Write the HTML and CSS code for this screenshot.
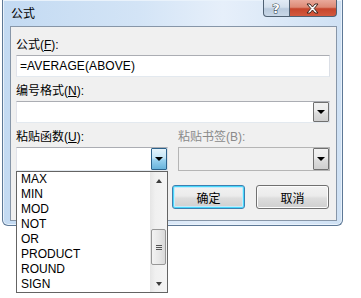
FILE: index.html
```html
<!DOCTYPE html>
<html lang="zh-CN">

<head>
    <meta charset="UTF-8">
    <title>公式</title>
    <link rel="stylesheet" href="styles.css">
</head>

<body>
    <div class="window">
        <div class="titlebar">
            <span class="title">公式</span>
            <div class="caption-buttons">
                <div class="cap-btn help">
                    <svg width="26" height="17" viewBox="0 0 26 17">
                        <text x="13" y="13" text-anchor="middle" class="cap-glyph">?</text>
                    </svg>
                </div>
                <div class="cap-btn close">
                    <svg width="47" height="17" viewBox="0 0 47 17">
                        <path d="M18 4 L21 4 L23.5 7 L26 4 L29 4 L25.2 8.5 L29 13 L26 13 L23.5 10 L21 13 L18 13 L21.8 8.5 Z" fill="#fff" stroke="#3b2620" stroke-width="1" stroke-linejoin="round"/>
                    </svg>
                </div>
            </div>
        </div>
        <div class="client">
            <div class="field-label">公式(<u>F</u>):</div>
            <div class="textbox">=AVERAGE(ABOVE)</div>

            <div class="field-label">编号格式(<u>N</u>):</div>
            <div class="combo">
                <span class="combo-text"></span>
                <span class="drop-btn"><span class="arrow"></span></span>
            </div>

            <div class="paste-row">
                <div class="paste-col">
                    <div class="field-label">粘贴函数(<u>U</u>):</div>
                    <div class="combo tall">
                        <span class="combo-text"></span>
                        <span class="drop-btn pressed"><span class="arrow"></span></span>
                    </div>
                </div>
                <div class="paste-col">
                    <div class="field-label disabled">粘贴书签(B):</div>
                    <div class="combo tall disabled">
                        <span class="combo-text"></span>
                        <span class="drop-btn"><span class="arrow"></span></span>
                    </div>
                </div>
            </div>

            <div class="button-row">
                <button class="btn default">确定</button>
                <button class="btn">取消</button>
            </div>
        </div>
    </div>

    <!-- open list of the paste function combo -->
    <div class="dropdown-list">
        <ul class="items">
            <li>MAX</li>
            <li>MIN</li>
            <li>MOD</li>
            <li>NOT</li>
            <li>OR</li>
            <li>PRODUCT</li>
            <li>ROUND</li>
            <li>SIGN</li>
        </ul>
        <div class="scrollbar">
            <div class="sb-arrow up"></div>
            <div class="sb-track">
                <div class="sb-thumb">
                    <span class="grip"></span>
                    <span class="grip"></span>
                    <span class="grip"></span>
                </div>
            </div>
            <div class="sb-arrow down"></div>
        </div>
    </div>
</body>

</html>
```

FILE: styles.css
```css
body {
    margin: 0;
    padding: 0;
    background: #fff;
    font-family: "Liberation Sans", "Noto Sans CJK SC", sans-serif;
    font-size: 12px;
    color: #000;
    width: 361px;
    height: 298px;
    overflow: hidden;
    position: relative;
}
.window {
    margin-left: 2px;
    width: 339px;
    height: 225px;
    border: 1px solid #5d7896;
    border-top: none;
    border-radius: 0 0 6px 6px;
    background: linear-gradient(to right, #c3daf2 0%, #d3e4f6 40%, #e6effa 65%, #cfe1f4 100%);
    box-shadow: inset 0 0 0 1px #e9f2fb;
}
.titlebar {
    height: 26px;
    display: flex;
    justify-content: space-between;
    align-items: flex-start;
}
.title {
    margin-left: 8px;
    margin-top: 6px;
    line-height: 16px;
    color: #000;
}
.caption-buttons {
    display: flex;
    margin-right: 5px;
}
.cap-btn {
    height: 17px;
    border: 1px solid #4f6173;
    border-top: none;
    box-sizing: border-box;
}
.cap-btn svg {
    display: block;
    margin-left: -1px;
}
.help {
    width: 27px;
    border-radius: 0 0 0 4px;
    background: linear-gradient(#e2ebf5 0%, #d3dfec 45%, #b9cadd 55%, #c9d8e8 100%);
}
.close {
    width: 47px;
    border-left: none;
    border-radius: 0 0 4px 0;
    background: linear-gradient(#e9a99b 0%, #dd8a76 45%, #c6452c 55%, #d35a3f 100%);
}
.cap-glyph {
    font-family: "DejaVu Sans", sans-serif;
    font-weight: bold;
    font-size: 13px;
    fill: #fff;
    stroke: #2b3a4a;
    stroke-width: 1px;
    paint-order: stroke;
}
.client {
    margin-left: 7px;
    width: 314px;
    height: 182px;
    border: 1px solid #8796a8;
    background: #f0f0f0;
    padding: 11px 6px 0 5px;
}
.field-label {
    line-height: 14px;
    height: 14px;
    margin-bottom: 3px;
    white-space: nowrap;
}
.field-label u {
    text-underline-offset: 1px;
}
.field-label.disabled {
    color: #8a8a8a;
}
.textbox {
    height: 20px;
    line-height: 20px;
    border: 1px solid #abadb3;
    border-color: #abadb3 #dbdfe6 #e3e9ef #e2e3ea;
    background: #fff;
    padding-left: 3px;
    margin-bottom: 7px;
    letter-spacing: 0.1px;
}
.combo {
    height: 20px;
    border: 1px solid #abadb3;
    border-color: #abadb3 #dbdfe6 #e3e9ef #e2e3ea;
    background: #fff;
    display: flex;
    justify-content: space-between;
    margin-bottom: 7px;
}
.combo.tall {
    height: 22px;
    margin-bottom: 0;
}
.combo.disabled {
    background: #f0f0f0;
    border-color: #b5b5b5;
}
.combo-text {
    flex: 1;
}
.drop-btn {
    width: 14px;
    border: 1px solid #707070;
    border-radius: 1px;
    background: linear-gradient(#f2f2f2 0%, #ebebeb 45%, #dddddd 55%, #cfcfcf 100%);
    display: flex;
    align-items: center;
    justify-content: center;
}
.drop-btn.pressed {
    border-color: #2c628b;
    background: linear-gradient(#e5f4fc 0%, #c4e5f6 45%, #98d1ef 55%, #68b3db 100%);
}
.arrow {
    width: 0;
    height: 0;
    border-left: 4px solid transparent;
    border-right: 4px solid transparent;
    border-top: 4px solid #000;
}
.paste-row {
    display: flex;
    gap: 10px;
}
.paste-col {
    width: 152px;
}
.button-row {
    display: flex;
    justify-content: flex-end;
    gap: 11px;
    margin-top: 14px;
    margin-right: 1px;
}
.btn {
    width: 73px;
    height: 24px;
    padding: 0;
    border: 1px solid #707070;
    border-radius: 3px;
    background: linear-gradient(#f2f2f2 0%, #ebebeb 45%, #dddddd 55%, #cfcfcf 100%);
    font-family: "Liberation Sans", "Noto Sans CJK SC", sans-serif;
    font-size: 12px;
    color: #000;
    box-shadow: inset 0 0 0 1px #fcfcfc;
}
.btn.default {
    border-color: #3c7fb1;
    box-shadow: inset 0 0 0 1px #48d8fb, inset 0 0 0 2px #c6eafb;
}
.dropdown-list {
    position: absolute;
    left: 16px;
    top: 171px;
    width: 150px;
    height: 120px;
    border: 1px solid #646464;
    background: #fff;
    display: flex;
}
.items {
    list-style: none;
    margin: 0;
    padding: 0;
    flex: 1;
}
.items li {
    height: 15px;
    line-height: 15px;
    padding-left: 4px;
}
.scrollbar {
    width: 17px;
    display: flex;
    flex-direction: column;
    background: linear-gradient(to right, #e5e5e5, #f0f0f0 30%, #f4f4f4);
}
.sb-arrow {
    height: 17px;
    display: flex;
    align-items: center;
    justify-content: center;
}
.sb-arrow.up::after,
.sb-arrow.down::after {
    content: "";
    width: 0;
    height: 0;
    border-left: 3.5px solid transparent;
    border-right: 3.5px solid transparent;
}
.sb-arrow.up::after {
    border-bottom: 4px solid #3d3d3d;
}
.sb-arrow.down::after {
    border-top: 4px solid #3d3d3d;
}
.sb-track {
    flex: 1;
    position: relative;
}
.sb-thumb {
    margin: 40px 1px 0 1px;
    height: 34px;
    border: 1px solid #979797;
    border-radius: 2px;
    background: linear-gradient(to right, #f3f3f3, #e8e8e8 50%, #d9d9d9);
    display: flex;
    flex-direction: column;
    align-items: center;
    justify-content: center;
    gap: 1px;
}
.grip {
    width: 6px;
    height: 1px;
    background: #555;
}
```
